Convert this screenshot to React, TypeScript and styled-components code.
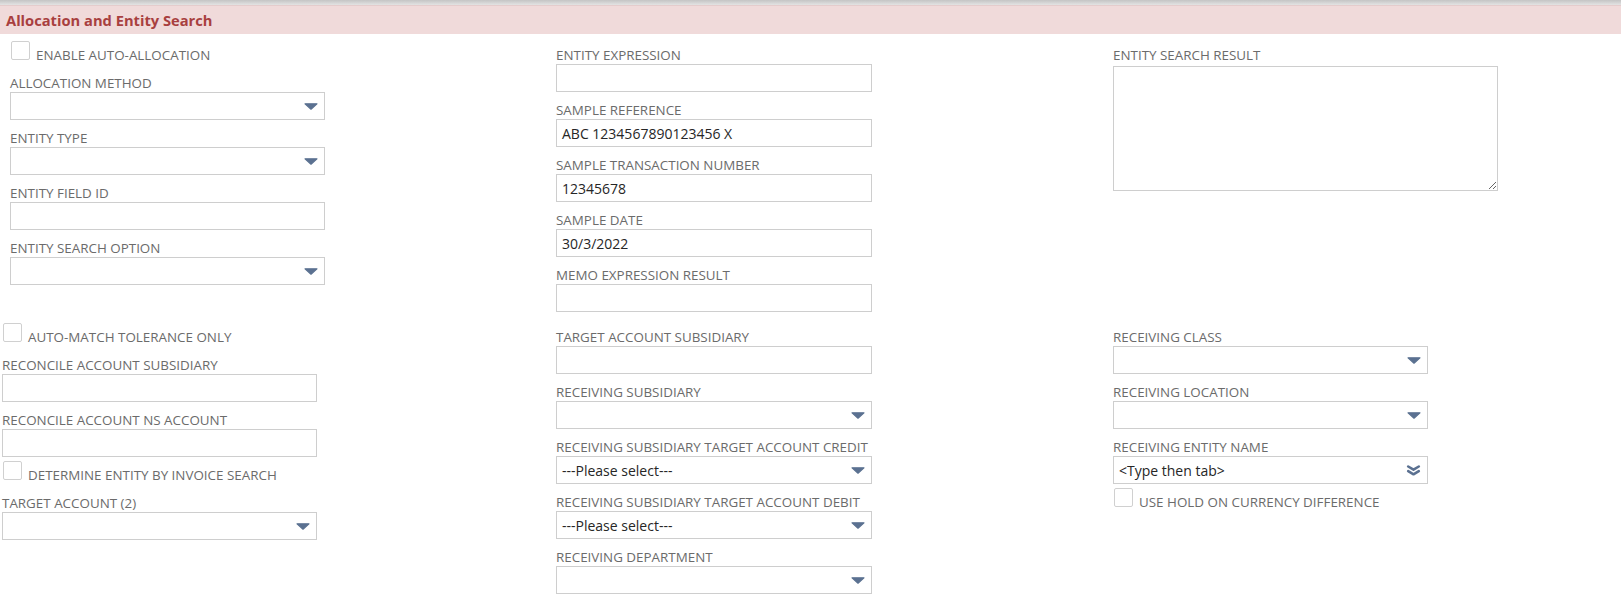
import React from "react";
import styled, { createGlobalStyle } from "styled-components";

const GlobalStyle = createGlobalStyle`
  html, body {
    margin: 0;
    padding: 0;
    background: #fff;
  }
  body {
    font-family: "Open Sans", "Liberation Sans", Arial, sans-serif;
  }
`;

const TopBar = styled.div`
  height: 5px;
  background: linear-gradient(#c4c4c4, #e3e3e3);
`;

const SectionHeader = styled.div`
  box-sizing: border-box;
  height: 29px;
  padding-left: 6px;
  display: flex;
  align-items: center;
  background: #f0dada;
  border-top: 1px solid #e4cccc;
  color: #a83f3f;
  font-size: 14.7px;
  font-weight: 700;
`;

const Section = styled.div<{ $inset: number }>`
  display: grid;
  grid-template-columns: ${(p) => 556 - p.$inset}px 557px 1fr;
  padding: 7px 0 0 ${(p) => p.$inset}px;
`;

const Column = styled.div`
  display: flex;
  flex-direction: column;
  align-items: flex-start;
`;

const Field = styled.div<{ $width?: number }>`
  display: flex;
  flex-direction: column;
  width: ${(p) => p.$width ?? 315}px;
  margin-bottom: 4px;
`;

const Label = styled.div`
  height: 23px;
  display: flex;
  align-items: flex-end;
  line-height: 18px;
  font-size: 13.4px;
  color: #6b6b6b;
  white-space: nowrap;
`;

const Box = styled.div`
  box-sizing: border-box;
  height: 28px;
  border: 1px solid #cecece;
  background: #fff;
  display: flex;
  align-items: center;
  justify-content: space-between;
  padding: 0 6px 0 5px;
  font-size: 14px;
  color: #262626;
  white-space: nowrap;
`;

const ResultArea = styled.textarea`
  box-sizing: border-box;
  width: 385px;
  height: 125px;
  margin: 2px 0 0;
  border: 1px solid #cecece;
  border-radius: 0;
  resize: both;
  outline: none;
  font-family: inherit;
  font-size: 14px;
`;

const CheckRow = styled.label`
  display: flex;
  align-items: flex-start;
  gap: 6px;
  height: 28px;
  font-size: 13.4px;
  line-height: 18px;
  color: #6b6b6b;
  white-space: nowrap;
`;

const CheckBox = styled.span`
  box-sizing: border-box;
  flex: none;
  width: 19px;
  height: 19px;
  margin-left: 1px;
  border: 1px solid #d0d0d0;
  border-radius: 2px;
  background: #fff;
`;

const CheckText = styled.span`
  margin-top: 5px;
`;

const Arrow = () => (
  <svg width="14" height="7" viewBox="0 0 14 7">
    <path
      d="M1 0.8 H13 L7 6.2 Z"
      fill="#5b7191"
      stroke="#5b7191"
      strokeWidth="1.2"
      strokeLinejoin="round"
    />
  </svg>
);

const DoubleArrow = () => (
  <svg width="15" height="11" viewBox="0 0 15 11">
    <g fill="none" stroke="#5b7191" strokeWidth="2.6" strokeLinecap="round" strokeLinejoin="round">
      <path d="M2.2 1.5 L7.5 4.6 L12.8 1.5" />
      <path d="M2.2 6.2 L7.5 9.3 L12.8 6.2" />
    </g>
  </svg>
);

type FieldProps = { label: string; value?: string; width?: number };

const TextField = ({ label, value, width }: FieldProps) => (
  <Field $width={width}>
    <Label>{label}</Label>
    <Box>{value}</Box>
  </Field>
);

const SelectField = ({ label, value, width, multi }: FieldProps & { multi?: boolean }) => (
  <Field $width={width}>
    <Label>{label}</Label>
    <Box>
      <span>{value}</span>
      {multi ? <DoubleArrow /> : <Arrow />}
    </Box>
  </Field>
);

const Check = ({ label }: { label: string }) => (
  <CheckRow>
    <CheckBox />
    <CheckText>{label}</CheckText>
  </CheckRow>
);

export default function App() {
  return (
    <>
      <GlobalStyle />
      <TopBar />
      <SectionHeader>Allocation and Entity Search</SectionHeader>

      <Section $inset={10}>
        <Column>
          <Check label="ENABLE AUTO-ALLOCATION" />
          <SelectField label="ALLOCATION METHOD" />
          <SelectField label="ENTITY TYPE" />
          <TextField label="ENTITY FIELD ID" />
          <SelectField label="ENTITY SEARCH OPTION" />
        </Column>
        <Column>
          <TextField label="ENTITY EXPRESSION" width={316} />
          <TextField label="SAMPLE REFERENCE" value="ABC 1234567890123456 X" width={316} />
          <TextField label="SAMPLE TRANSACTION NUMBER" value="12345678" width={316} />
          <TextField label="SAMPLE DATE" value="30/3/2022" width={316} />
          <TextField label="MEMO EXPRESSION RESULT" width={316} />
        </Column>
        <Column>
          <Field $width={385}>
            <Label>ENTITY SEARCH RESULT</Label>
            <ResultArea readOnly />
          </Field>
        </Column>
      </Section>

      <Section $inset={2}>
        <Column>
          <Check label="AUTO-MATCH TOLERANCE ONLY" />
          <TextField label="RECONCILE ACCOUNT SUBSIDIARY" />
          <TextField label="RECONCILE ACCOUNT NS ACCOUNT" />
          <Check label="DETERMINE ENTITY BY INVOICE SEARCH" />
          <SelectField label="TARGET ACCOUNT (2)" />
        </Column>
        <Column>
          <TextField label="TARGET ACCOUNT SUBSIDIARY" width={316} />
          <SelectField label="RECEIVING SUBSIDIARY" width={316} />
          <SelectField
            label="RECEIVING SUBSIDIARY TARGET ACCOUNT CREDIT"
            value="---Please select---"
            width={316}
          />
          <SelectField
            label="RECEIVING SUBSIDIARY TARGET ACCOUNT DEBIT"
            value="---Please select---"
            width={316}
          />
          <SelectField label="RECEIVING DEPARTMENT" width={316} />
        </Column>
        <Column>
          <SelectField label="RECEIVING CLASS" />
          <SelectField label="RECEIVING LOCATION" />
          <SelectField label="RECEIVING ENTITY NAME" value="<Type then tab>" multi />
          <Check label="USE HOLD ON CURRENCY DIFFERENCE" />
        </Column>
      </Section>
    </>
  );
}
